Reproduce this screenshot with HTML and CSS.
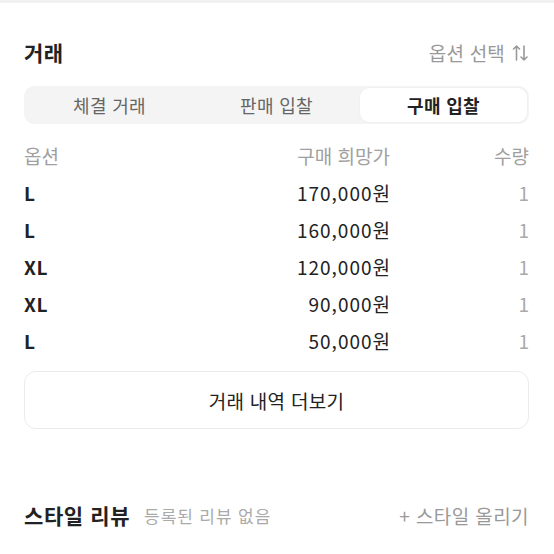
FILE: index.html
```html
<!DOCTYPE html>
<html lang="ko">
<head>
<meta charset="utf-8">
<link rel="stylesheet" href="styles.css">
</head>
<body>
<div class="topbar"></div>
<main class="page">
  <section class="trade">
    <div class="head">
      <h2 class="title">거래</h2>
      <div class="opt">옵션 선택
        <svg class="sort" width="17" height="18" viewBox="0 0 17 18" fill="none" stroke="#999" stroke-width="1.6" stroke-linecap="round" stroke-linejoin="round">
          <path d="M4.5 16V2M1.5 5l3-3 3 3"/>
          <path d="M12 2v14M9 13l3 3 3-3"/>
        </svg>
      </div>
    </div>
    <div class="seg">
      <div class="tab">체결 거래</div>
      <div class="tab">판매 입찰</div>
      <div class="tab active">구매 입찰</div>
    </div>
    <div class="table">
      <div class="th">옵션</div><div class="th r">구매 희망가</div><div class="th r">수량</div>
      <div class="size">L</div><div class="price">170,000원</div><div class="qty">1</div>
      <div class="size">L</div><div class="price">160,000원</div><div class="qty">1</div>
      <div class="size">XL</div><div class="price">120,000원</div><div class="qty">1</div>
      <div class="size">XL</div><div class="price">90,000원</div><div class="qty">1</div>
      <div class="size">L</div><div class="price">50,000원</div><div class="qty">1</div>
    </div>
    <button class="more">거래 내역 더보기</button>
  </section>
  <section class="review">
    <div class="rleft">
      <h2 class="title wide">스타일 리뷰</h2>
      <span class="none">등록된 리뷰 없음</span>
    </div>
    <div class="add">+ 스타일 올리기</div>
  </section>
</main>
</body>
</html>
```
FILE: styles.css
```css
* { box-sizing: border-box; }
body {
  margin: 0;
  background: #fff;
  font-family: "Noto Sans CJK KR", "Noto Sans", sans-serif;
  color: #222;
}
.topbar { height: 3px; background: #f1f1f1; }
.page { padding: 37px 25px 0 24px; }
.head {
  display: flex;
  justify-content: space-between;
  align-items: center;
  height: 24px;
}
.title {
  margin: 0;
  font-size: 21px;
  font-weight: 700;
  color: #222;
  line-height: 24px;
  letter-spacing: 0.4px;
}
.title.wide { letter-spacing: 0.6px; }
.opt {
  display: flex;
  align-items: center;
  gap: 7px;
  font-size: 19px;
  color: #999;
  letter-spacing: 0.2px;
}
.sort { margin-top: 1px; }
.seg {
  margin-top: 22px;
  display: grid;
  grid-template-columns: 1fr 1fr 1fr;
  height: 38px;
  padding: 2px;
  background: #f4f4f4;
  border-radius: 10px;
}
.tab {
  display: flex;
  align-items: center;
  justify-content: center;
  font-size: 18px;
  color: #666;
  letter-spacing: 0.3px;
  border-radius: 9px;
}
.tab.active {
  background: #fff;
  color: #222;
  font-weight: 700;
  box-shadow: 0 0 2px rgba(0,0,0,0.06);
}
.table {
  margin-top: 13px;
  display: grid;
  grid-template-columns: 1fr auto 139px;
  grid-auto-rows: 37px;
  align-items: center;
  font-size: 19px;
}
.th { color: #a0a0a0; }
.r { text-align: right; }
.size { font-weight: 700; color: #222; letter-spacing: 0.6px; }
.price { text-align: right; color: #222; letter-spacing: 1px; margin-right: -1px; }
.qty { text-align: right; color: #aaa; }
.more {
  margin-top: 12px;
  width: 100%;
  height: 58px;
  background: #fff;
  border: 1px solid #ebebeb;
  border-radius: 12px;
  font-family: inherit;
  font-size: 19px;
  color: #222;
  letter-spacing: 0.3px;
}
.review {
  margin-top: 74px;
  display: flex;
  justify-content: space-between;
  align-items: center;
  height: 24px;
}
.rleft { display: flex; align-items: center; gap: 14px; }
.none { font-size: 17px; color: #aaa; letter-spacing: 0.9px; }
.add { font-size: 19px; color: #999; letter-spacing: 0.4px; }
```
